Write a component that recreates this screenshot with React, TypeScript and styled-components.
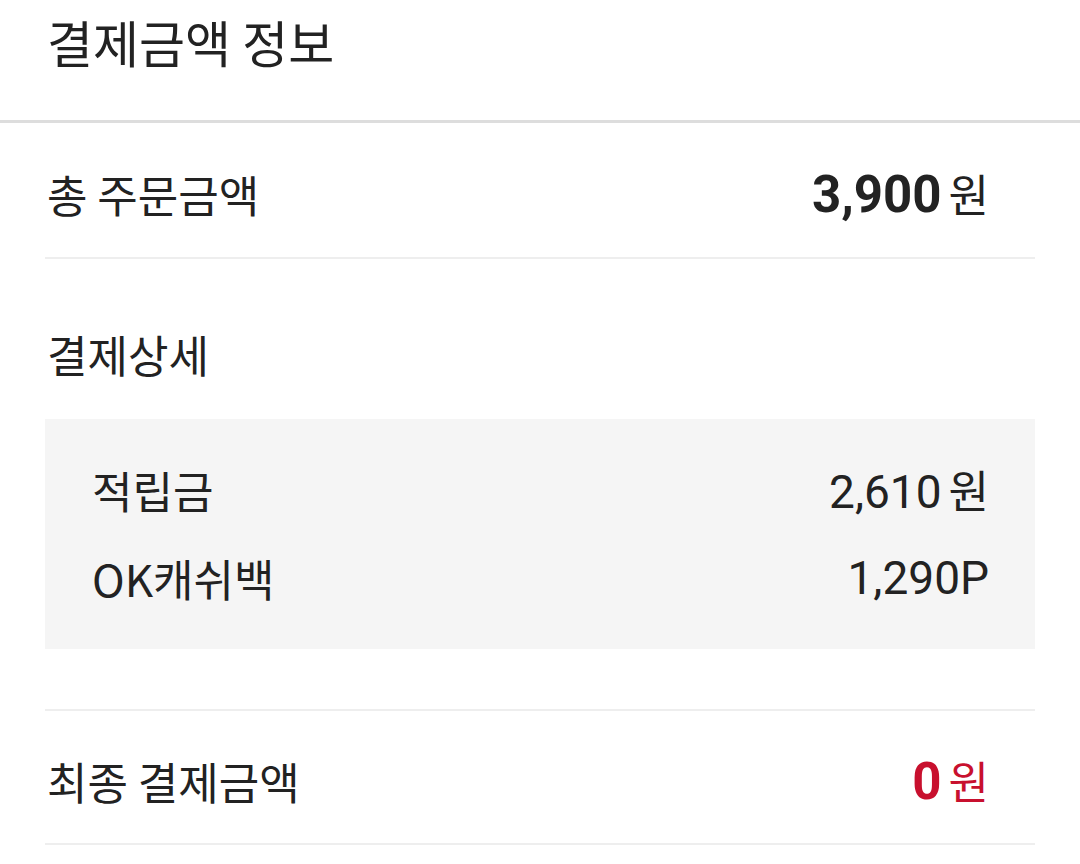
import React from "react";
import styled, { createGlobalStyle } from "styled-components";

const Global = createGlobalStyle`
  html, body { margin: 0; padding: 0; background: #ffffff; }
  body { font-family: Roboto, "Noto Sans CJK KR", sans-serif; color: #222222; }
  * { box-sizing: border-box; }
`;

const Page = styled.div`
  width: 1080px;
  min-height: 864px;
  background: #ffffff;
`;

const Header = styled.header`
  height: 123px;
  padding: 9px 47px 0;
  border-bottom: 3px solid #dddddd;
`;

const Title = styled.h1`
  margin: 0;
  font-family: "Noto Sans CJK KR", sans-serif;
  font-weight: 400;
  font-size: 50px;
  line-height: 64px;
  color: #222222;
`;

const Body = styled.div`
  padding: 0 45px;
`;

const Row = styled.div<{ $h: number; $top?: number; $divider?: boolean }>`
  display: flex;
  align-items: center;
  justify-content: space-between;
  height: ${(p) => p.$h}px;
  padding: ${(p) => p.$top ?? 0}px 46px 0 2px;
  border-bottom: ${(p) => (p.$divider ? "2px solid #eeeeee" : "none")};
`;

const Label = styled.span`
  font-family: "Noto Sans CJK KR", sans-serif;
  font-size: 44px;
  line-height: 58px;
  color: #222222;
`;

const Value = styled.span<{ $bold?: boolean; $red?: boolean }>`
  display: flex;
  align-items: baseline;
  gap: 7px;
  font-family: Roboto, "Noto Sans CJK KR", sans-serif;
  font-size: ${(p) => (p.$bold ? 51 : 46)}px;
  font-weight: ${(p) => (p.$bold ? 700 : 400)};
  line-height: 58px;
  color: ${(p) => (p.$red ? "#c8102e" : "#222222")};
`;

const Unit = styled.span`
  font-family: "Noto Sans CJK KR", sans-serif;
  font-size: 44px;
  font-weight: 400;
`;

const SectionHead = styled.div`
  height: 160px;
  display: flex;
  align-items: center;
  padding: 30px 0 0 2px;
`;

const DetailBox = styled.div`
  background: #f5f5f5;
  padding: 27px 46px 27px 47px;
`;

const DetailRow = styled.div`
  display: flex;
  align-items: center;
  justify-content: space-between;
  height: 88px;
`;

const Spacer = styled.div`
  height: 62px;
  border-bottom: 2px solid #eeeeee;
`;

export default function App() {
  return (
    <Page>
      <Global />
      <Header>
        <Title>결제금액 정보</Title>
      </Header>
      <Body>
        <Row $h={136} $top={8} $divider>
          <Label>총 주문금액</Label>
          <Value $bold>
            3,900<Unit>원</Unit>
          </Value>
        </Row>
        <SectionHead>
          <Label>결제상세</Label>
        </SectionHead>
        <DetailBox>
          <DetailRow>
            <Label>적립금</Label>
            <Value>
              2,610<Unit>원</Unit>
            </Value>
          </DetailRow>
          <DetailRow>
            <Label>OK캐쉬백</Label>
            <Value>1,290P</Value>
          </DetailRow>
        </DetailBox>
        <Spacer />
        <Row $h={134} $top={8} $divider>
          <Label>최종 결제금액</Label>
          <Value $bold $red>
            0<Unit>원</Unit>
          </Value>
        </Row>
      </Body>
    </Page>
  );
}
